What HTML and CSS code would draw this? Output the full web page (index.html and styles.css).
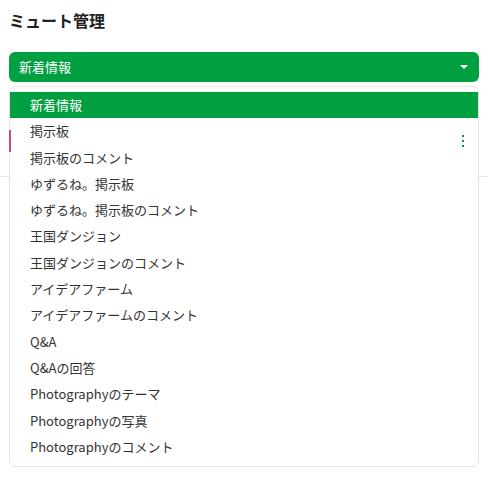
FILE: index.html
```html
<!DOCTYPE html>
<html lang="ja">
<head>
<meta charset="utf-8">
<link rel="stylesheet" href="styles.css">
</head>
<body>
<div class="page">
  <h1 class="title">ミュート管理</h1>
  <div class="select-wrap">
    <div class="select">
      <span>新着情報</span>
      <span class="caret"></span>
    </div>
    <ul class="menu">
      <li class="item active">新着情報</li>
      <li class="item">掲示板</li>
      <li class="item">掲示板のコメント</li>
      <li class="item">ゆずるね。掲示板</li>
      <li class="item">ゆずるね。掲示板のコメント</li>
      <li class="item">王国ダンジョン</li>
      <li class="item">王国ダンジョンのコメント</li>
      <li class="item">アイデアファーム</li>
      <li class="item">アイデアファームのコメント</li>
      <li class="item">Q&amp;A</li>
      <li class="item">Q&amp;Aの回答</li>
      <li class="item">Photographyのテーマ</li>
      <li class="item">Photographyの写真</li>
      <li class="item">Photographyのコメント</li>
    </ul>
  </div>
  <div class="row">
    <span class="accent"></span>
    <span class="kebab"><i></i><i></i><i></i></span>
  </div>
</div>
</body>
</html>
```

FILE: styles.css
```css
* { box-sizing: border-box; }
html, body { margin: 0; padding: 0; background: #fff; }
body {
  min-height: 480px;
  font-family: "Noto Sans CJK JP", "Noto Sans", sans-serif;
  color: #333;
}
.page {
  min-height: 480px;
  padding: 0 9px;
}
.title {
  margin: 0;
  padding-top: 9px;
  height: 52px;
  font-size: 16px;
  line-height: 22px;
  font-weight: 700;
  color: #222;
}
.select-wrap {
  position: relative;
  z-index: 2;
}
.select {
  height: 30px;
  border-radius: 6px;
  background: #00a040;
  color: #fff;
  font-size: 13px;
  line-height: 30px;
  padding: 0 10px;
  display: flex;
  justify-content: space-between;
  align-items: center;
}
.caret {
  width: 0;
  height: 0;
  border-left: 4px solid transparent;
  border-right: 4px solid transparent;
  border-top: 4px solid #fff;
  margin-right: 1px;
}
.menu {
  position: absolute;
  left: 0;
  right: 0;
  top: 34px;
  margin: 0;
  padding: 5px 0 6px;
  list-style: none;
  background: #fff;
  border: 1px solid #e4e4e4;
  border-radius: 6px;
}
.item {
  height: 26.3px;
  line-height: 26.3px;
  padding-left: 20px;
  font-size: 13px;
  color: #333;
  white-space: nowrap;
}
.item.active {
  background: #00a040;
  color: #fff;
}
.row {
  position: relative;
  margin: 23px -9px 0;
  height: 72px;
  border-bottom: 1px solid #e6e6e6;
  display: flex;
  align-items: center;
  justify-content: space-between;
  padding: 0 24px 0 9px;
}
.accent {
  position: relative;
  z-index: 3;
  width: 2px;
  height: 22px;
  background: #c64a82;
}
.kebab {
  position: relative;
  z-index: 3;
  display: flex;
  flex-direction: column;
  gap: 3px;
  margin-top: 1px;
}
.kebab i {
  display: block;
  width: 2px;
  height: 2px;
  background: #00a040;
}
```
